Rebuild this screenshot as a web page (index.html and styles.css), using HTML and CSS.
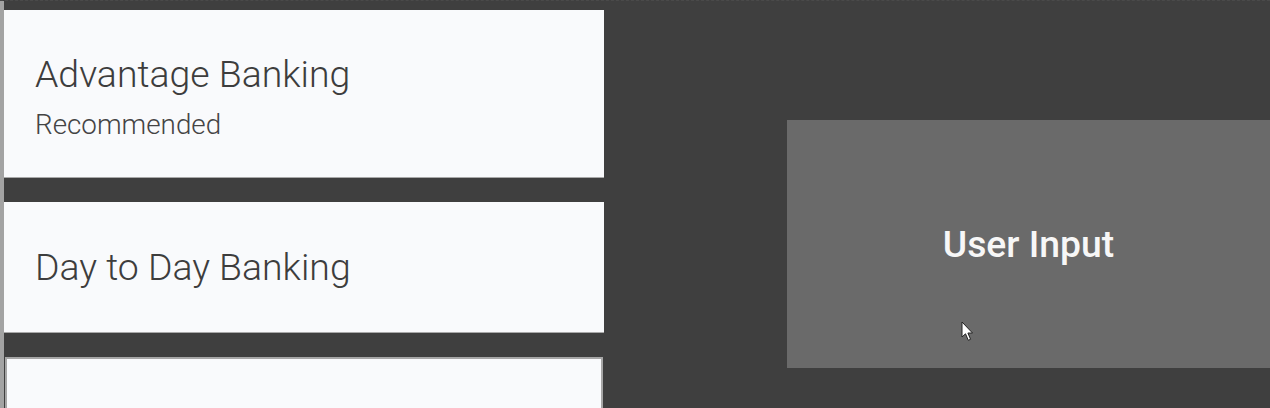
FILE: index.html
```html
<!DOCTYPE html>
<html>
<head>
<meta charset="utf-8">
<link rel="stylesheet" href="styles.css">
</head>
<body>
<div class="screen">
  <div class="strip"></div>
  <div class="list">
    <div class="card card-first">
      <div class="title">Advantage Banking</div>
      <div class="sub">Recommended</div>
    </div>
    <div class="card card-second">
      <div class="title">Day to Day Banking</div>
    </div>
    <div class="card card-third"></div>
  </div>
  <div class="side">
    <div class="panel">
      <span class="panel-label">User Input</span>
      <svg class="cursor" width="14" height="21" viewBox="0 0 14 21">
        <path d="M1 1 L1 16 L4.5 12.8 L7.3 19.3 L9.6 18.3 L6.9 12 L11.5 12 Z" fill="#ffffff" stroke="#222" stroke-width="1" stroke-linejoin="round"/>
      </svg>
    </div>
  </div>
</div>
</body>
</html>
```
FILE: styles.css
```css
html, body {
  margin: 0;
  padding: 0;
  background: #3f3f3f;
  width: 1270px;
  height: 408px;
  overflow: hidden;
  font-family: Roboto, "Liberation Sans", sans-serif;
}
.screen {
  display: flex;
  height: 408px;
  border-top: 1px dashed #4a4a4a;
  box-sizing: border-box;
}
.strip {
  width: 4px;
  background: #a3a3a3;
  flex: none;
}
.list {
  width: 600px;
  flex: none;
  padding-top: 9px;
  display: flex;
  flex-direction: column;
  gap: 24px;
}
.card {
  background: #f9fafc;
  box-sizing: border-box;
  padding-left: 31px;
  flex: none;
}
.card-first {
  height: 168px;
  padding-top: 42px;
  border-bottom: 1px solid #a9a9a9;
}
.card-second {
  height: 131px;
  display: flex;
  flex-direction: column;
  justify-content: center;
  border-bottom: 1px solid #a9a9a9;
}
.card-third {
  height: 60px;
  border: 2px solid #a6a6a6;
  border-bottom: none;
  margin-left: 1px;
  margin-right: 1px;
}
.title {
  font-size: 37.4px;
  line-height: 44px;
  font-weight: 300;
  color: #3d3d3d;
}
.sub {
  margin-top: 12px;
  font-size: 27.8px;
  line-height: 33px;
  font-weight: 300;
  color: #444;
}
.side {
  flex: 1;
  display: flex;
  justify-content: flex-end;
  padding-top: 119px;
}
.panel {
  position: relative;
  width: 483px;
  height: 248px;
  background: #6a6a6a;
  display: flex;
  align-items: center;
  justify-content: center;
}
.panel-label {
  font-size: 37.3px;
  line-height: 44px;
  font-weight: 500;
  color: #f7f7f7;
}
.cursor {
  position: absolute;
  left: 174px;
  top: 201px;
}
```
